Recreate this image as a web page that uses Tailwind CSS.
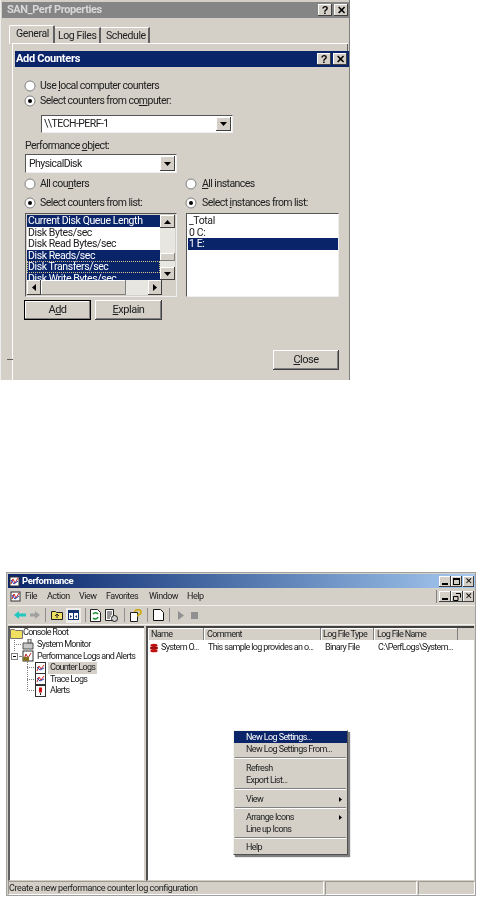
<!DOCTYPE html>
<html><head><meta charset="utf-8"><script src="https://cdn.jsdelivr.net/npm/@tailwindcss/browser@4"></script></head>
<body class="bg-white">
<div class="relative w-[479px] h-[897px] overflow-hidden bg-white font-['Roboto',sans-serif] text-black blur-[0.4px]">

<!-- Top window -->
<div class="relative w-[350px] h-[380px] bg-[#d4d0c8] border-l border-l-[#eeeeee] border-r border-r-[#808080] pt-[2px] pl-[1px]">
  <div class="h-[16px] w-[347px] bg-[#858585] flex items-center justify-between pl-[5px] pr-[1px] text-[#d8d8d8] font-bold text-[11px] tracking-[-0.4px]">
    <span>SAN_Perf Properties</span>
    <div class="flex gap-[2px]">
      <span class="w-[14px] h-[12px] bg-[#d4d0c8] shadow-[inset_-1px_-1px_0_#404040,inset_1px_1px_0_#fff] text-black text-[11px] leading-[12px] text-center font-['Liberation_Sans']">?</span>
      <span class="w-[14px] h-[12px] bg-[#d4d0c8] shadow-[inset_-1px_-1px_0_#404040,inset_1px_1px_0_#fff] text-black text-[11px] leading-[12px] text-center font-['Liberation_Sans']">✕</span>
    </div>
  </div>
  <!-- tabs -->
  <div class="flex h-[25px] pt-[7px] pl-[7px] text-[10.500px] tracking-[-0.4px] text-[#202020] whitespace-nowrap">
    <div class="w-[46px] h-[19px] bg-[#d4d0c8] border-l border-t border-white border-r-2 border-r-[#606060] rounded-t-[2px] pl-[6px] leading-[15px]">General</div>
    <div class="w-[46px] h-[17px] mt-[2px] border-t border-white border-r-2 border-r-[#606060] pl-[3px] leading-[16px]">Log Files</div>
    <div class="w-[49px] h-[17px] mt-[2px] border-t border-white border-r-2 border-r-[#606060] pl-[5px] leading-[16px]">Schedule</div>
  </div>
  <!-- panel -->
  <div class="ml-[10px] mr-[1px] border-t border-white border-l border-l-white h-[337px] pt-[7px] pl-[2px] relative">
    <div class="absolute right-0 top-0 w-[1px] h-[7px] bg-[#606060]"></div>
    <div class="absolute left-[-6px] top-[315px] w-[6px] h-[1px] bg-[#606060]"></div>
    <!-- Add Counters -->
    <div class="w-[334px] h-[16px] bg-[#0a246a] flex items-center justify-between pl-[1px] pr-[2px] text-white font-bold text-[11px] tracking-[-0.3px]">
      <span>Add Counters</span>
      <div class="flex gap-[2px]">
        <span class="w-[14px] h-[12px] bg-[#d4d0c8] shadow-[inset_-1px_-1px_0_#404040,inset_1px_1px_0_#fff] text-black text-[11px] leading-[12px] text-center font-['Liberation_Sans']">?</span>
        <span class="w-[14px] h-[12px] bg-[#d4d0c8] shadow-[inset_-1px_-1px_0_#404040,inset_1px_1px_0_#fff] text-black text-[11px] leading-[12px] text-center font-['Liberation_Sans']">✕</span>
      </div>
    </div>
    <div class="text-[10.500px] tracking-[-0.55px] text-[#202020]">
      <div class="flex items-center gap-[4px] h-[15px] pl-[9px] mt-[11px]">
        <svg width="12" height="12" viewBox="0 0 12 12"><circle cx="6" cy="6" r="5" fill="#fff" stroke="#808080"/></svg>
        <span>Use <u>l</u>ocal computer counters</span>
      </div>
      <div class="flex items-center gap-[4px] h-[15px] pl-[9px]">
        <svg width="12" height="12" viewBox="0 0 12 12"><circle cx="6" cy="6" r="5" fill="#fff" stroke="#808080"/><circle cx="6" cy="6" r="2" fill="#000"/></svg>
        <span>Select counters from co<u>m</u>puter:</span>
      </div>
      <div class="ml-[26px] mt-[7px] w-[192px] h-[18px] flex items-center justify-between bg-white border border-t-[#555555] border-l-[#555555] border-r-[#eeeeee] border-b-[#eeeeee] pl-[2px] pr-[1px]">
        <span>\\TECH-PERF-1</span>
        <span class="w-[15px] h-[14px] bg-[#d4d0c8] shadow-[inset_-1px_-1px_0_#404040,inset_1px_1px_0_#fff] flex items-center justify-center"><svg width="7" height="4"><path d="M0 0h7L3.500 4z" fill="#000"/></svg></span>
      </div>
      <div class="pl-[10px] mt-[6px] h-[14px] leading-[14px]">Performance <u>o</u>bject:</div>
      <div class="ml-[10px] mt-[1px] w-[152px] h-[19px] flex items-center justify-between bg-white border border-t-[#555555] border-l-[#555555] border-r-[#eeeeee] border-b-[#eeeeee] pl-[3px] pr-[1px]">
        <span>PhysicalDisk</span>
        <span class="w-[15px] h-[15px] bg-[#d4d0c8] shadow-[inset_-1px_-1px_0_#404040,inset_1px_1px_0_#fff] flex items-center justify-center"><svg width="7" height="4"><path d="M0 0h7L3.500 4z" fill="#000"/></svg></span>
      </div>
      <div class="flex mt-[4px] h-[14px]">
        <div class="flex items-center gap-[4px] w-[160px] pl-[9px]">
          <svg width="12" height="12" viewBox="0 0 12 12"><circle cx="6" cy="6" r="5" fill="#fff" stroke="#808080"/></svg>
          <span>All cou<u>n</u>ters</span>
        </div>
        <div class="flex items-center gap-[5px] pl-[10px]">
          <svg width="12" height="12" viewBox="0 0 12 12"><circle cx="6" cy="6" r="5" fill="#fff" stroke="#808080"/></svg>
          <span><u>A</u>ll instances</span>
        </div>
      </div>
      <div class="flex mt-[5px] h-[14px]">
        <div class="flex items-center gap-[4px] w-[160px] pl-[9px]">
          <svg width="12" height="12" viewBox="0 0 12 12"><circle cx="6" cy="6" r="5" fill="#fff" stroke="#808080"/><circle cx="6" cy="6" r="2" fill="#000"/></svg>
          <span>Select counters from list:</span>
        </div>
        <div class="flex items-center gap-[5px] pl-[10px]">
          <svg width="12" height="12" viewBox="0 0 12 12"><circle cx="6" cy="6" r="5" fill="#fff" stroke="#808080"/><circle cx="6" cy="6" r="2" fill="#000"/></svg>
          <span>Select <u>i</u>nstances from list:</span>
        </div>
      </div>
      <!-- lists -->
      <div class="flex mt-[3px] pl-[10px] gap-[9px] leading-[11.500px] tracking-[-0.4px]">
        <div class="w-[152px] h-[84px] border border-t-[#555555] border-l-[#555555] border-r-[#eeeeee] border-b-[#eeeeee] p-[1px] flex flex-col">
          <div class="flex h-[65px]">
            <div class="w-[135px] h-[65px] bg-white overflow-hidden whitespace-nowrap">
              <div class="bg-[#0a246a] text-white h-[11.500px] pl-[1px]">Current Disk Queue Length</div>
              <div class="h-[11.500px] pl-[1px]">Disk Bytes/sec</div>
              <div class="h-[11.500px] pl-[1px]">Disk Read Bytes/sec</div>
              <div class="bg-[#0a246a] text-white h-[11.500px] pl-[1px]">Disk Reads/sec</div>
              <div class="bg-[#0a246a] text-white h-[11.500px] pl-[1px] outline-1 -outline-offset-1 outline-dotted outline-[#d8c888]">Disk Transfers/sec</div>
              <div class="bg-[#0a246a] text-white h-[11.500px] pl-[1px]">Disk Write Bytes/sec</div>
            </div>
            <div class="w-[15px] h-[65px] bg-[#e8e6e0] flex flex-col justify-between relative">
              <span class="w-[15px] h-[13px] bg-[#d4d0c8] shadow-[inset_-1px_-1px_0_#404040,inset_1px_1px_0_#fff] flex items-center justify-center"><svg width="7" height="4"><path d="M3.500 0L7 4H0z" fill="#000"/></svg></span>
              <span class="absolute top-[38px] left-0 w-[15px] h-[8px] bg-[#d4d0c8] shadow-[inset_-1px_-1px_0_#808080,inset_1px_1px_0_#fff]"></span>
              <span class="w-[15px] h-[13px] bg-[#d4d0c8] shadow-[inset_-1px_-1px_0_#404040,inset_1px_1px_0_#fff] flex items-center justify-center"><svg width="7" height="4"><path d="M0 0h7L3.500 4z" fill="#000"/></svg></span>
            </div>
          </div>
          <div class="flex h-[15px] w-[135px] bg-[#e8e6e0] justify-between relative">
            <span class="w-[14px] h-[15px] bg-[#d4d0c8] shadow-[inset_-1px_-1px_0_#404040,inset_1px_1px_0_#fff] flex items-center justify-center"><svg width="4" height="7"><path d="M4 0v7L0 3.500z" fill="#000"/></svg></span>
            <span class="absolute left-[14px] top-0 w-[85px] h-[15px] bg-[#d4d0c8] shadow-[inset_-1px_-1px_0_#808080,inset_1px_1px_0_#fff]"></span>
            <span class="w-[14px] h-[15px] bg-[#d4d0c8] shadow-[inset_-1px_-1px_0_#404040,inset_1px_1px_0_#fff] flex items-center justify-center"><svg width="4" height="7"><path d="M0 0v7l4-3.500z" fill="#000"/></svg></span>
          </div>
        </div>
        <div class="w-[153px] h-[84px] bg-white border border-t-[#555555] border-l-[#555555] border-r-[#eeeeee] border-b-[#eeeeee] pt-[1px] pl-[1px]">
          <div class="h-[11.500px] pl-[1px]">_Total</div>
          <div class="h-[11.500px] pl-[1px]">0 C:</div>
          <div class="bg-[#0a246a] text-white h-[11.500px] pl-[1px]">1 E:</div>
        </div>
      </div>
      <!-- buttons -->
      <div class="flex gap-[4px] pl-[9px] mt-[3px] text-[11px] tracking-[-0.5px]">
        <div class="w-[67px] h-[20px] flex items-center justify-center bg-[#d4d0c8] border border-black shadow-[inset_-1px_-1px_0_#808080,inset_1px_1px_0_#fff]">A<u>d</u>d</div>
        <div class="w-[67px] h-[20px] flex items-center justify-center bg-[#d4d0c8] shadow-[inset_-1px_-1px_0_#404040,inset_1px_1px_0_#fff,inset_-2px_-2px_0_#808080]"><u>E</u>xplain</div>
      </div>
      <div class="ml-[258px] mt-[30px] w-[66px] h-[20px] flex items-center justify-center bg-[#d4d0c8] shadow-[inset_-1px_-1px_0_#404040,inset_1px_1px_0_#fff,inset_-2px_-2px_0_#808080] text-[11px] tracking-[-0.5px]"><u>C</u>lose</div>
    </div>
  </div>
</div>

<!-- Lower window -->
<div class="relative ml-[6px] mt-[192px] w-[470px] h-[324px] bg-[#d4d0c8] border border-[#a0a0a0] pt-[1px] pl-[1px] text-[9px] tracking-[-0.5px] text-[#202020] flex flex-col">
  <!-- title -->
  <div class="h-[14px] w-[467px] shrink-0 bg-gradient-to-r from-[#0a246a] to-[#a6caf0] flex items-center justify-between pl-[1px] pr-[1px]">
    <div class="flex items-center gap-[2px] text-white font-bold text-[9.500px] tracking-[-0.4px]">
      <svg width="11" height="12" viewBox="0 0 11 12"><rect x="1" y="2" width="9" height="9" fill="#fff" stroke="#303030"/><path d="M2 9L4 4 6 8 9 3" fill="none" stroke="#c02020"/><path d="M2 5L5 9 9 6" fill="none" stroke="#2040c0"/></svg>
      <span>Performance</span>
    </div>
    <div class="flex">
      <span class="w-[12px] h-[11px] bg-[#d4d0c8] shadow-[inset_-1px_-1px_0_#404040,inset_1px_1px_0_#fff] flex items-end justify-center pb-[2px]"><span class="w-[6px] h-[2px] bg-black"></span></span>
      <span class="w-[11px] h-[11px] bg-[#d4d0c8] shadow-[inset_-1px_-1px_0_#404040,inset_1px_1px_0_#fff] flex items-center justify-center"><span class="w-[7px] h-[7px] border border-black border-t-2"></span></span>
      <span class="w-[11px] h-[11px] ml-[1px] bg-[#d4d0c8] shadow-[inset_-1px_-1px_0_#404040,inset_1px_1px_0_#fff] text-black text-[9px] leading-[11px] text-center">✕</span>
    </div>
  </div>
  <!-- menu -->
  <div class="h-[18px] shrink-0 w-[467px] border-b border-[#f0eee8] flex items-center relative">
    <svg class="ml-[2px]" width="12" height="13" viewBox="0 0 12 13"><rect x="1" y="2" width="9" height="9" fill="#fff" stroke="#303030"/><path d="M2 9L4 4 6 8 9 3" fill="none" stroke="#c02020"/><path d="M2 5L5 9 9 6" fill="none" stroke="#2040c0"/></svg>
    <span class="ml-[3px] w-[22px]">File</span><span class="w-[32px]">Action</span><span class="w-[27px]">View</span><span class="w-[43px]">Favorites</span><span class="w-[38px]">Window</span><span>Help</span>
    <div class="absolute right-[1px] top-[2px] flex items-center">
      <span class="w-[1px] h-[13px] bg-[#808080] mr-[2px]"></span>
      <span class="w-[12px] h-[11px] bg-[#d4d0c8] shadow-[inset_-1px_-1px_0_#404040,inset_1px_1px_0_#fff] flex items-end justify-center pb-[2px]"><span class="w-[6px] h-[2px] bg-black"></span></span>
      <span class="w-[12px] h-[11px] bg-[#d4d0c8] shadow-[inset_-1px_-1px_0_#404040,inset_1px_1px_0_#fff] flex items-center justify-center"><svg width="8" height="8"><path d="M3 .500h4.500v4M.500 3.500h4.500v4h-4.500z" fill="none" stroke="#000"/></svg></span>
      <span class="w-[11px] h-[11px] bg-[#d4d0c8] shadow-[inset_-1px_-1px_0_#404040,inset_1px_1px_0_#fff] text-black text-[9px] leading-[11px] text-center">✕</span>
    </div>
  </div>
  <!-- toolbar -->
  <div class="h-[19px] shrink-0 w-[467px] border-b border-[#f4f2ee] flex items-center pl-[5px]">
    <svg width="14" height="12" viewBox="0 0 14 12"><path d="M1 6l5-4v2.500h7v3H6V10z" fill="#20c8c0"/></svg>
    <svg class="ml-[2px]" width="12" height="12" viewBox="0 0 12 12"><path d="M11 6L6 2v2.500H1v3h5V10z" fill="#a0a0a0"/></svg>
    <span class="ml-[4px] w-[1px] h-[14px] bg-[#909090]"></span>
    <svg class="ml-[5px]" width="12" height="12" viewBox="0 0 12 12"><path d="M.500 2.500h4l1 1h6v7h-11z" fill="#f0e060" stroke="#202020"/><path d="M6 9V5M4 7l2-2 2 2" fill="none" stroke="#202020"/></svg>
    <span class="ml-[3px] w-[15px] h-[15px] bg-[#eeece6] flex items-center justify-center"><svg width="11" height="10" viewBox="0 0 11 10"><rect x=".5" y=".5" width="10" height="9" fill="#fff" stroke="#103070"/><rect x="1" y="1" width="9" height="2" fill="#103070"/><path d="M5.500 1v8" stroke="#103070"/><path d="M2 5l2 1.500L2 8zM9 5L7 6.500 9 8z" fill="#103070"/></svg></span>
    <span class="ml-[4px] w-[1px] h-[14px] bg-[#909090]"></span>
    <svg class="ml-[4px]" width="11" height="13" viewBox="0 0 11 13"><path d="M.500.500h7l3 3v9h-10z" fill="#fff" stroke="#202020"/><path d="M3 5a3 3 0 0 1 5 0M8 8a3 3 0 0 1-5 1" fill="none" stroke="#109030" stroke-width="1.500"/></svg>
    <svg class="ml-[4px]" width="13" height="13" viewBox="0 0 13 13"><path d="M.500.500h8v11h-8z" fill="#fff" stroke="#202020"/><path d="M2 3h5M2 5h5M2 7h4M2 9h3" stroke="#303030"/><circle cx="9.500" cy="9.500" r="3" fill="#d0d0d0" stroke="#202020"/></svg>
    <span class="ml-[6px] w-[1px] h-[14px] bg-[#909090]"></span>
    <svg class="ml-[5px]" width="12" height="13" viewBox="0 0 12 13"><path d="M.500 3.500h7v9h-7z" fill="#fff" stroke="#202020"/><path d="M5 3a3 2.500 0 1 1 4 2.500c-1 .5-1 1-1 2" fill="none" stroke="#d0b020" stroke-width="2"/></svg>
    <span class="ml-[5px] w-[1px] h-[14px] bg-[#909090]"></span>
    <svg class="ml-[5px]" width="11" height="12" viewBox="0 0 11 12"><path d="M.500.500h7l3 3v8h-10z" fill="#fff" stroke="#101010"/></svg>
    <span class="ml-[5px] w-[1px] h-[14px] bg-[#909090]"></span>
    <svg class="ml-[7px]" width="7" height="9" viewBox="0 0 7 9"><path d="M1 0l6 4.500L1 9z" fill="#909090"/></svg>
    <span class="ml-[7px] w-[7px] h-[7px] bg-[#909090]"></span>
  </div>
  <!-- panes -->
  <div class="flex flex-1 mt-[1px] gap-[2px] min-h-0">
    <div class="w-[136px] bg-white border-t-2 border-l-2 border-[#404040] border-l-[#606060] border-b border-b-[#d4d0c8] relative leading-[11.500px] whitespace-nowrap tracking-[-0.7px]">
      <span class="absolute left-[4px] top-[10px] h-[13px] border-l border-dotted border-[#808080]"></span>
      <span class="absolute left-[17px] top-[33px] h-[30px] border-l border-dotted border-[#808080]"></span>
      <div class="flex items-center h-[12px] -mt-[1px]">
        <svg width="13" height="11" viewBox="0 0 13 11"><path d="M.500 1.500h4l1 1h7v8h-12z" fill="#f0e060" stroke="#707070"/></svg>
        <span>Console Root</span>
      </div>
      <div class="flex items-center h-[11.500px] pl-[4px] gap-[1px]">
        <span class="w-[7px] border-t border-dotted border-[#808080]"></span>
        <svg width="12" height="11" viewBox="0 0 12 11"><path d="M1 4h10v6H1z" fill="#c8c8c8" stroke="#505050"/><path d="M6 0h3v4H6z" fill="#e0e0e0" stroke="#505050"/></svg>
        <span class="ml-[2px]">System Monitor</span>
      </div>
      <div class="flex items-center h-[11.500px] pl-[1px] gap-[1px]">
        <span class="w-[7px] h-[7px] border border-[#808080] bg-white flex items-center justify-center"><span class="w-[3px] h-[1px] bg-black"></span></span>
        <span class="w-[2px] border-t border-dotted border-[#808080]"></span>
        <svg width="12" height="12" viewBox="0 0 12 12"><rect x="1" y="1" width="10" height="10" fill="#fff" stroke="#303030"/><path d="M2 9L4 4 6 8 9 3" fill="none" stroke="#c02020"/><path d="M1 7h6v4H1z" fill="#807020"/></svg>
        <span class="ml-[2px]">Performance Logs and Alerts</span>
      </div>
      <div class="flex items-center h-[11.500px] pl-[17px] gap-[1px]">
        <span class="w-[7px] border-t border-dotted border-[#808080]"></span>
        <svg width="11" height="12" viewBox="0 0 11 12"><rect x=".5" y=".5" width="10" height="11" fill="#fff" stroke="#303030"/><path d="M2 9L4 4 6 7 9 3" fill="none" stroke="#d02020"/><path d="M2 5l3 3 4-2" fill="none" stroke="#2040c0"/></svg>
        <span class="ml-[1px] bg-[#d4d0c8] px-[2px] h-[12px]">Counter Logs</span>
      </div>
      <div class="flex items-center h-[11.500px] pl-[17px] gap-[1px]">
        <span class="w-[7px] border-t border-dotted border-[#808080]"></span>
        <svg width="11" height="12" viewBox="0 0 11 12"><rect x=".5" y=".5" width="10" height="11" fill="#fff" stroke="#303030"/><path d="M2 9L4 4 6 7 9 3" fill="none" stroke="#d02020"/><path d="M2 5l3 3 4-2" fill="none" stroke="#2040c0"/></svg>
        <span class="ml-[1px] px-[2px]">Trace Logs</span>
      </div>
      <div class="flex items-center h-[11.500px] pl-[17px] gap-[1px]">
        <span class="w-[7px] border-t border-dotted border-[#808080]"></span>
        <svg width="11" height="12" viewBox="0 0 11 12"><rect x=".5" y=".5" width="10" height="11" fill="#fff" stroke="#303030"/><path d="M5.500 2.500v5" stroke="#d01010" stroke-width="3"/><path d="M5.500 8v2" stroke="#202020"/></svg>
        <span class="ml-[1px] px-[2px]">Alerts</span>
      </div>
    </div>
    <div class="flex-1 bg-white border-t-2 border-l-2 border-[#404040] border-l-[#505050] border-b border-b-[#d4d0c8] mr-[1px] flex flex-col whitespace-nowrap tracking-[-0.65px]">
      <div class="h-[12px] bg-[#d4d0c8] flex shrink-0 leading-[12px]">
        <div class="w-[56px] pl-[3px] border-r border-[#808080] shadow-[inset_1px_1px_0_#fff]">Name</div>
        <div class="w-[117px] pl-[3px] border-r border-[#808080] shadow-[inset_1px_1px_0_#fff]">Comment</div>
        <div class="w-[53px] pl-[2px] border-r border-[#808080] shadow-[inset_1px_1px_0_#fff]">Log File Type</div>
        <div class="w-[84px] pl-[3px] border-r border-[#808080] shadow-[inset_1px_1px_0_#fff]">Log File Name</div>
      </div>
      <div class="flex items-center h-[12px] mt-[2px] pl-[1px]">
        <div class="w-[56px] flex items-center gap-[2px]">
          <svg width="10" height="10" viewBox="0 0 11 10"><ellipse cx="5.500" cy="2" rx="4" ry="1.800" fill="#c01010"/><ellipse cx="5.500" cy="5" rx="4.500" ry="1.800" fill="#a01010"/><ellipse cx="5.500" cy="8" rx="4" ry="1.800" fill="#c01010"/></svg>
          <span>System O...</span>
        </div>
        <span class="w-[116px] ml-[3px] overflow-hidden">This sample log provides an o...</span>
        <span class="w-[53px] ml-[1px]">Binary File</span>
        <span>C:\PerfLogs\System...</span>
      </div>
    </div>
  </div>
  <!-- status -->
  <div class="h-[14px] shrink-0 flex gap-[1px] w-[467px] leading-[12px] tracking-[-0.4px]">
    <div class="w-[316px] border border-[#9c9890] border-r-white border-b-white">Create a new performance counter log configuration</div>
    <div class="w-[92px] border border-[#9c9890] border-r-white border-b-white"></div>
    <div class="flex-1 border border-[#9c9890] border-r-white border-b-white"></div>
  </div>

  <!-- context menu -->
  <div class="absolute left-[226px] top-[157px] w-[115px] h-[125px] bg-[#d4d0c8] border border-[#f4f2ee] border-r-[#505050] border-b-[#505050] shadow-[2px_2px_1px_#808080] flex flex-col leading-[12px] whitespace-nowrap tracking-[-0.6px]">
    <div class="h-[12px] bg-[#0a246a] text-white pl-[12px] shrink-0">New Log Settings...</div>
    <div class="h-[12px] pl-[12px] shrink-0">New Log Settings From...</div>
    <div class="mx-[1px] h-[2px] my-[2px] border-t border-[#808080] border-b border-b-white shrink-0"></div>
    <div class="h-[12px] pl-[12px] mt-[1px] shrink-0">Refresh</div>
    <div class="h-[12px] pl-[12px] shrink-0">Export List...</div>
    <div class="mx-[1px] h-[2px] my-[2px] border-t border-[#808080] border-b border-b-white shrink-0"></div>
    <div class="h-[12px] pl-[12px] mt-[1px] flex items-center justify-between pr-[5px] shrink-0"><span>View</span><svg width="3" height="5"><path d="M0 0v5l3-2.500z" fill="#000"/></svg></div>
    <div class="mx-[1px] h-[2px] my-[2px] border-t border-[#808080] border-b border-b-white shrink-0"></div>
    <div class="h-[12px] pl-[12px] flex items-center justify-between pr-[5px] shrink-0"><span>Arrange Icons</span><svg width="3" height="5"><path d="M0 0v5l3-2.500z" fill="#000"/></svg></div>
    <div class="h-[12px] pl-[12px] shrink-0">Line up Icons</div>
    <div class="mx-[1px] h-[2px] my-[2px] border-t border-[#808080] border-b border-b-white shrink-0"></div>
    <div class="h-[12px] pl-[12px] shrink-0">Help</div>
  </div>
</div>
</div>
</body></html>
